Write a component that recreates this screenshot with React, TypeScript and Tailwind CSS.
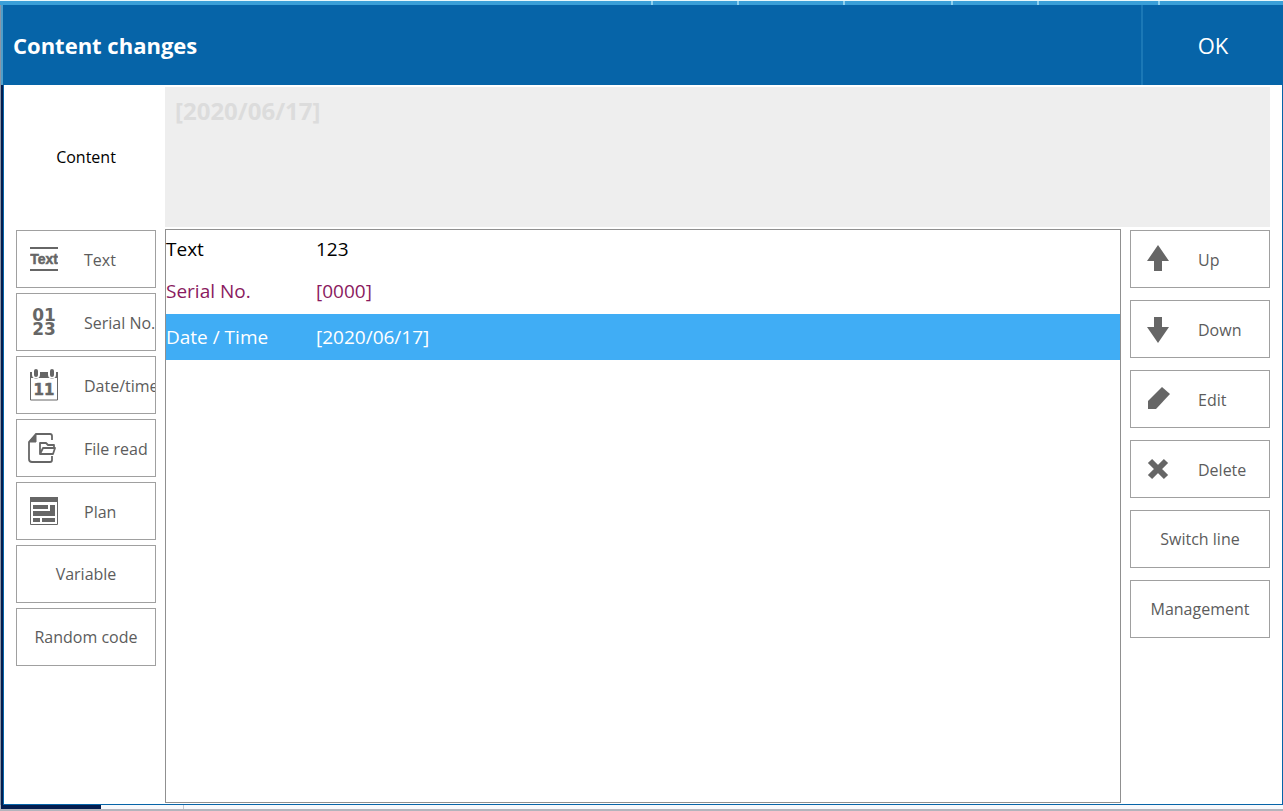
import type { ReactNode } from "react";
import clsx from "clsx";

const ink = "#666666";

function TextIcon() {
  return (
    <svg width="28" height="28" viewBox="0 0 28 28" aria-hidden="true">
      <path d="M0 3h28M0 25h28" stroke={ink} strokeWidth="2" />
      <text
        x="14"
        y="19"
        textAnchor="middle"
        fontSize="14"
        fontWeight="700"
        fill={ink}
        stroke={ink}
        strokeWidth="0.5"
        className="font-['Liberation_Sans',sans-serif]"
      >
        Text
      </text>
    </svg>
  );
}

function SerialIcon() {
  return (
    <svg width="28" height="32" viewBox="0 0 28 32" aria-hidden="true">
      <g
        fontSize="17"
        fontWeight="700"
        fill={ink}
        textAnchor="middle"
        className="font-['DejaVu_Sans',sans-serif]"
      >
        <text x="14" y="15">01</text>
        <text x="14" y="29">23</text>
      </g>
    </svg>
  );
}

function CalendarIcon() {
  return (
    <svg width="28" height="32" viewBox="0 0 28 32" aria-hidden="true">
      <path d="M.5 8v23h27V8" fill="none" stroke={ink} />
      <path
        d="M0 3h2v2.500a4 4 0 0 0 8 0V3h8v2.500a4 4 0 0 0 8 0V3h2v6H0z"
        fill={ink}
      />
      <rect x="4" y="0" width="4" height="8" rx="2" fill={ink} />
      <rect x="20" y="0" width="4" height="8" rx="2" fill={ink} />
      <text
        x="14"
        y="26"
        textAnchor="middle"
        fontSize="15"
        fontWeight="700"
        fill={ink}
        stroke={ink}
        strokeWidth="0.5"
        className="font-['DejaVu_Sans',sans-serif]"
      >
        11
      </text>
    </svg>
  );
}

function FileIcon() {
  return (
    <svg width="32" height="30" viewBox="2 0 32 30" fill="none" stroke={ink} aria-hidden="true">
      <path d="M26 7V3q0-2-2-2H10L3 9v17q0 3 3 3h18q2 0 2-2v-4" strokeWidth="1.800" />
      <path d="M3 9h7V1z" fill={ink} />
      <path d="M14 21V10h6l2 2h6v3M14 21l3-6h12l-2 6z" strokeWidth="1.800" strokeLinejoin="round" />
    </svg>
  );
}

function PlanIcon() {
  return (
    <svg width="28" height="28" viewBox="0 0 28 28" fill={ink} aria-hidden="true">
      <path d="M.5 4v23.500h27V4" fill="none" stroke={ink} />
      <path d="M0 0h28v5H0zM3 8h15v4H3zM20 8h5v11H3v-5h17zM3 21h7v4H3zM12 21h13v4H12z" />
    </svg>
  );
}

function ArrowIcon({ down = false }: { down?: boolean }) {
  return (
    <svg width="28" height="28" viewBox="0 0 28 28" fill={ink} aria-hidden="true">
      <path
        d={down ? "M10 2h8v10h7L14 28 3 12h7z" : "M14 0l11 16h-7v10h-8V16H3z"}
      />
    </svg>
  );
}

function EditIcon() {
  return (
    <svg width="28" height="28" viewBox="0 0 28 28" fill={ink} aria-hidden="true">
      <path d="M4 24v-8L18 2l8 7-14 15z" />
    </svg>
  );
}

function DeleteIcon() {
  return (
    <svg width="28" height="28" viewBox="0 0 28 28" aria-hidden="true">
      <path d="M6 6l16 16M22 6L6 22" stroke={ink} strokeWidth="6" />
    </svg>
  );
}

type Action = { label: string; icon?: ReactNode };

const insertActions: Action[] = [
  { label: "Text", icon: <TextIcon /> },
  { label: "Serial No.", icon: <SerialIcon /> },
  { label: "Date/time", icon: <CalendarIcon /> },
  { label: "File read", icon: <FileIcon /> },
  { label: "Plan", icon: <PlanIcon /> },
  { label: "Variable" },
  { label: "Random code" },
];

const rowActions: Action[] = [
  { label: "Up", icon: <ArrowIcon /> },
  { label: "Down", icon: <ArrowIcon down /> },
  { label: "Edit", icon: <EditIcon /> },
  { label: "Delete", icon: <DeleteIcon /> },
  { label: "Switch line" },
  { label: "Management" },
];

const rows = [
  { type: "Text", value: "123", style: "h-[42px] text-black", cell: "pb-1" },
  { type: "Serial No.", value: "[0000]", style: "h-[42px] text-[#8a1a60]", cell: "pb-1" },
  { type: "Date / Time", value: "[2020/06/17]", style: "h-[46px] bg-[#40adf5] text-white", cell: "" },
];

function ActionButton({ label, icon }: Action) {
  return (
    <button
      type="button"
      className={clsx(
        "flex h-[58px] w-full shrink-0 items-center overflow-hidden border border-[#a0a0a0] bg-white text-base whitespace-nowrap text-[#5c5c5c]",
        !icon && "justify-center",
      )}
    >
      {icon && <span className="flex w-[54px] shrink-0 justify-center">{icon}</span>}
      <span className={clsx(icon && "pt-[2px] pl-[13px]")}>{label}</span>
    </button>
  );
}

export default function App() {
  return (
    <div className="flex min-h-screen flex-col bg-[#b4b4bc] font-['Open_Sans','Noto_Sans',sans-serif]">
      <div className="flex h-[5px] shrink-0 overflow-hidden border-t border-[#e8f8fc] bg-[#3a9fd8]">
        <span className="w-[653px] shrink-0 border-r-2 border-[#8fd0ee]" />
        <span className="w-[86px] shrink-0 border-r-2 border-[#8fd0ee]" />
        <span className="w-[106px] shrink-0 border-r-2 border-[#8fd0ee]" />
        <span className="w-[108px] shrink-0 border-r-2 border-[#8fd0ee]" />
        <span className="w-[86px] shrink-0 border-r-2 border-[#8fd0ee]" />
        <span className="w-[121px] shrink-0 border-r-2 border-[#8fd0ee]" />
      </div>

      <div className="flex flex-1">
        <div className="flex w-[3px] shrink-0 flex-col border-l border-[#8c94a4]">
          <div className="h-20 bg-[#4f9fca]" />
          <div className="flex-1 bg-[#041d4e]" />
        </div>

        <main className="flex min-w-0 flex-1 flex-col">
          <header className="flex h-20 shrink-0 bg-[#0664a8] text-white">
            <h1 className="flex flex-1 items-center pl-[10px] text-[22px] font-bold">
              Content changes
            </h1>
            <button
              type="button"
              className="w-[142px] border-l-2 border-[#1b78b6] text-[22px]"
            >
              OK
            </button>
          </header>

          <div className="grid flex-1 grid-cols-[140px_minmax(0,1fr)_140px] grid-rows-[140px_1fr] gap-x-[9px] gap-y-[2px] border-x border-b border-[#0664a8] bg-white px-3 pt-[2px] pb-px">
            <label
              htmlFor="content"
              className="flex items-center justify-center text-base text-black"
            >
              Content
            </label>
            <textarea
              id="content"
              readOnly
              value="[2020/06/17]"
              className="col-span-2 block h-full resize-none bg-[#eeeeee] px-[10px] py-2 text-2xl leading-8 font-bold text-[#dcdcdc] outline-none"
            />

            <div className="flex flex-col gap-[5px] pt-px">
              {insertActions.map((a) => (
                <ActionButton key={a.label} {...a} />
              ))}
            </div>

            <div className="border border-[#909090]">
              <table className="w-full table-fixed border-collapse text-[19px] leading-6">
                <tbody>
                  {rows.map((r) => (
                    <tr key={r.type} className={r.style}>
                      <td className={clsx("w-[150px]", r.cell)}>{r.type}</td>
                      <td className={r.cell}>{r.value}</td>
                    </tr>
                  ))}
                </tbody>
              </table>
            </div>

            <div className="flex flex-col gap-3 pt-px">
              {rowActions.map((a) => (
                <ActionButton key={a.label} {...a} />
              ))}
            </div>
          </div>
        </main>
      </div>

      <footer className="flex h-[6px] shrink-0 border-b-2 border-l border-[#b4b4bc] bg-[#f7f8fb]">
        <span className="w-[100px] bg-[#041d4e]" />
        <span className="w-[83px] border-r border-[#c4c8d0]" />
      </footer>
    </div>
  );
}
